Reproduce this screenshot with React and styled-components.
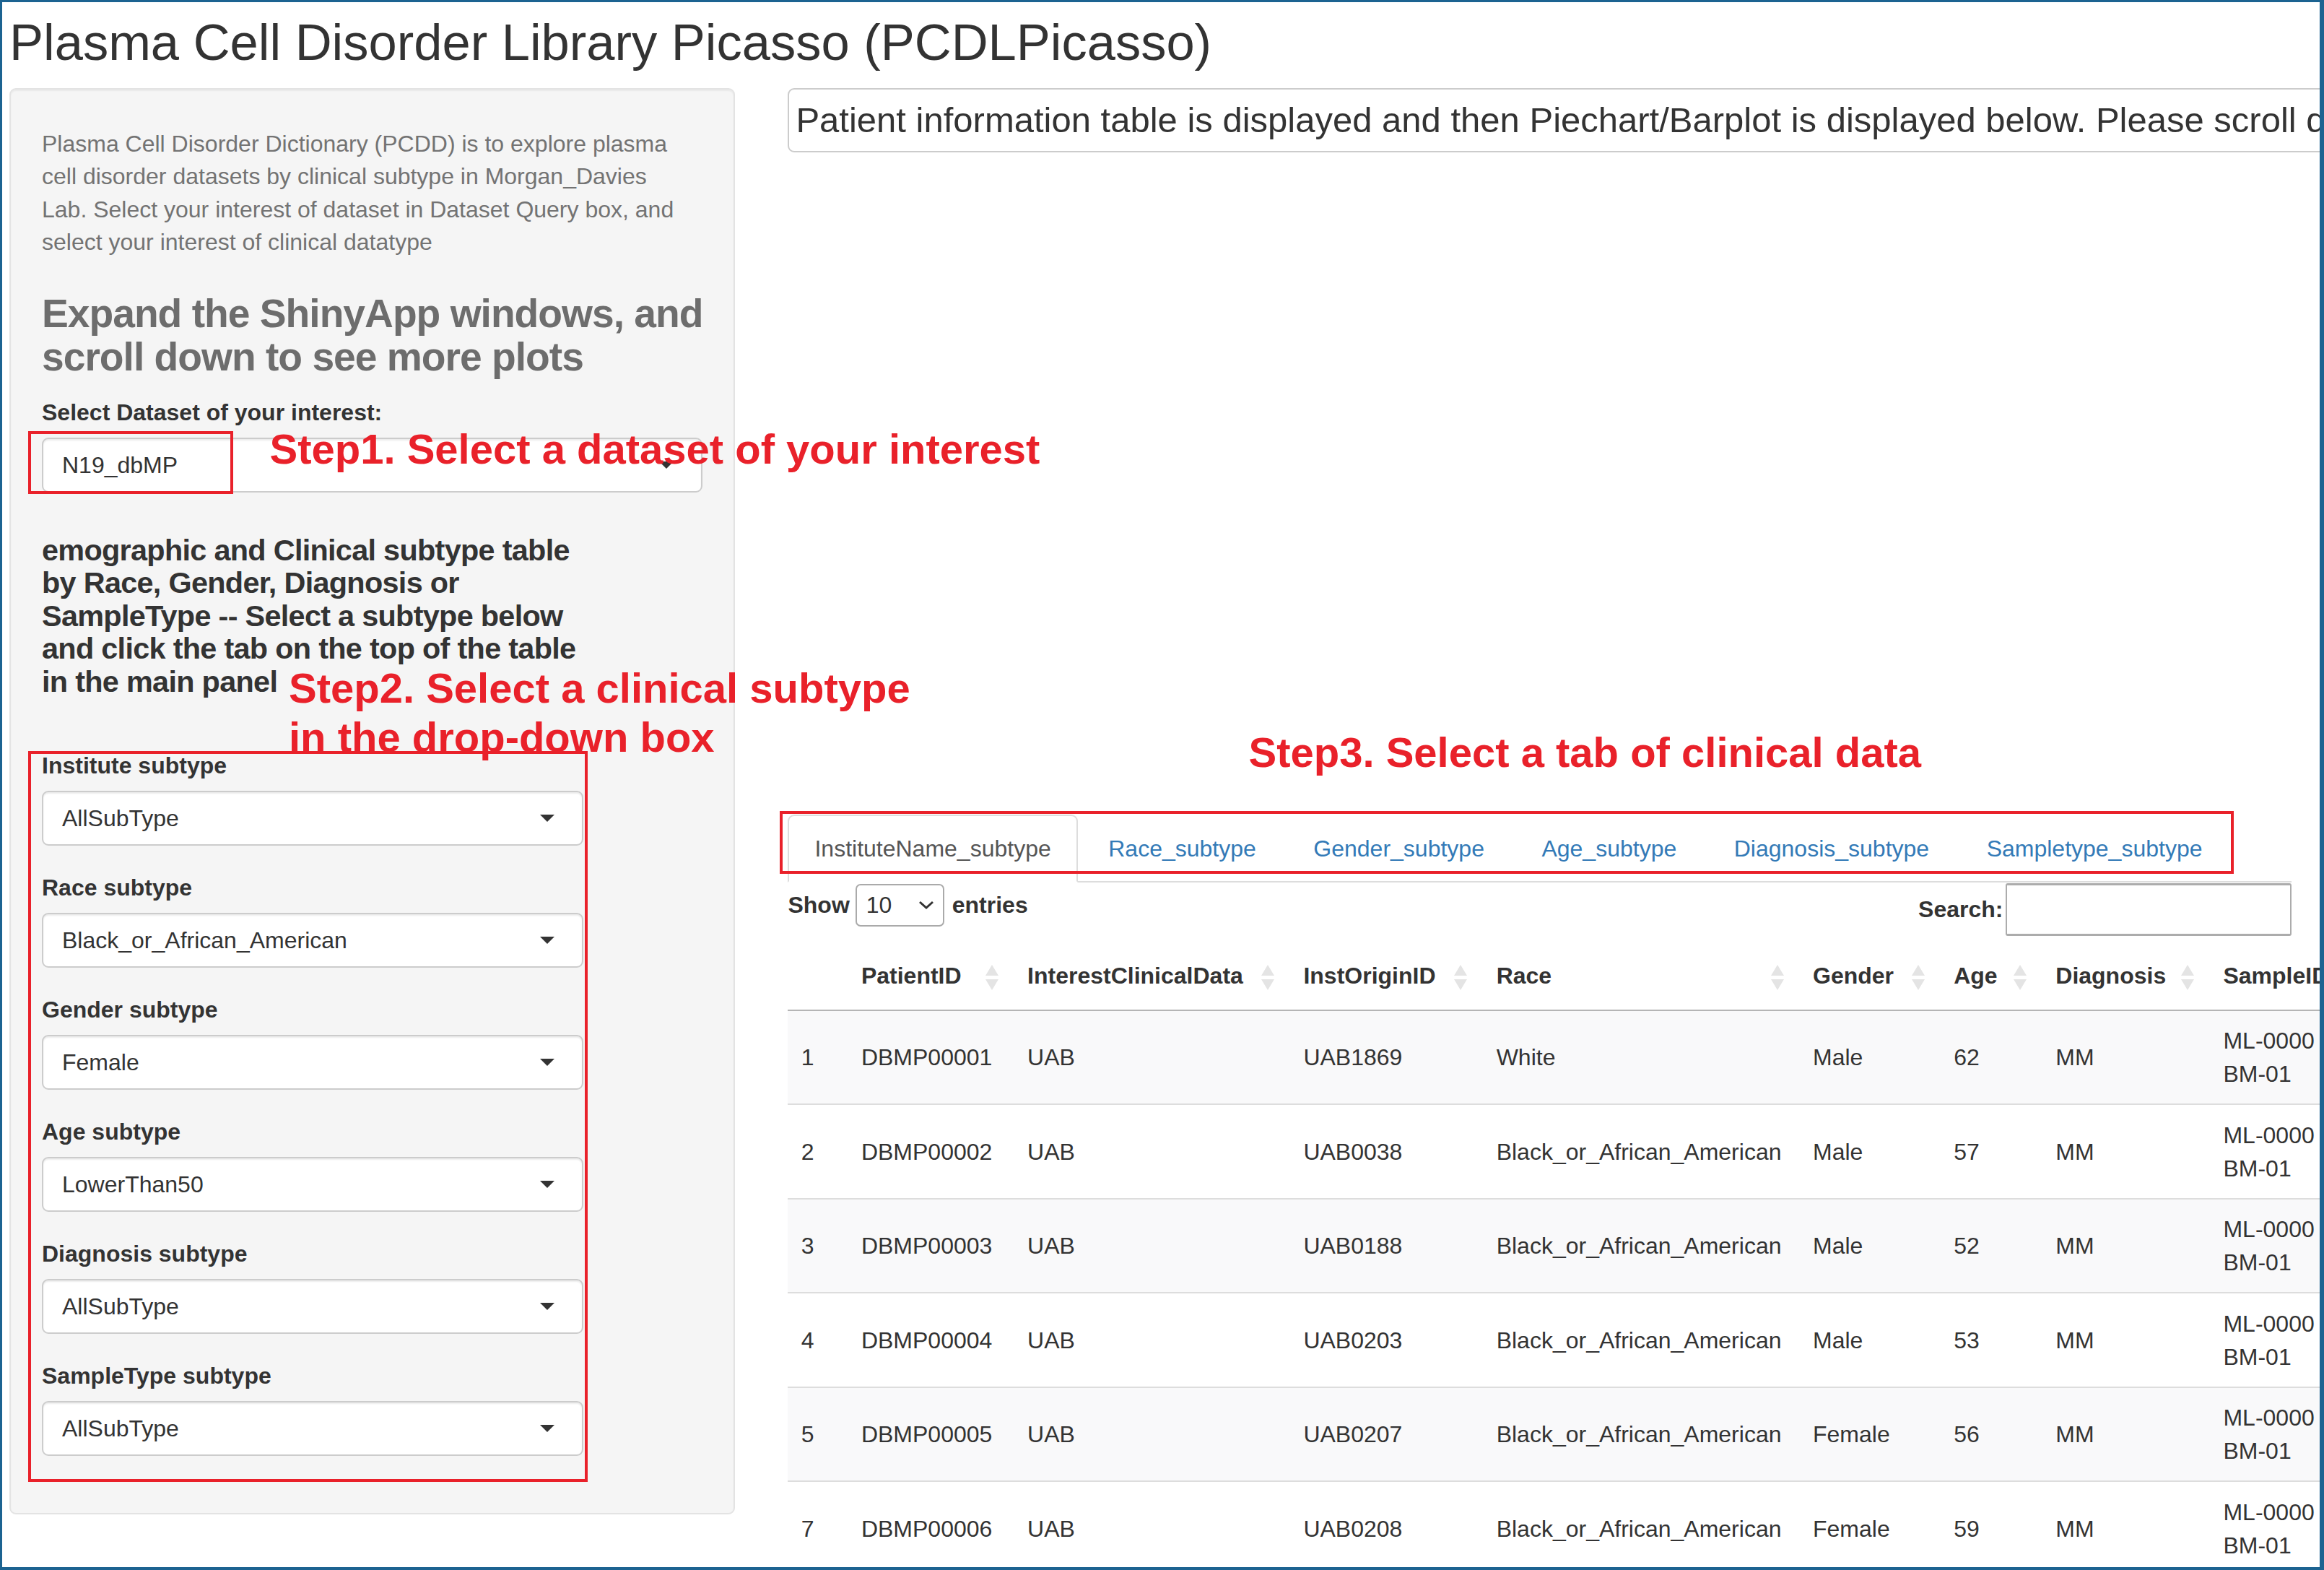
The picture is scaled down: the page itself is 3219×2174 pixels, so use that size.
import React from 'react';
import styled, { createGlobalStyle } from 'styled-components';

const GlobalStyle = createGlobalStyle`
  html, body { margin: 0; padding: 0; background: #fff; overflow: hidden; }
  * { box-sizing: border-box; }
`;

const Frame = styled.div`
  position: relative;
  width: 3219px;
  height: 2174px;
  border-style: solid;
  border-color: #1c6391;
  border-width: 3px 6px 4px 3px;
  overflow: hidden;
  padding-left: 10px;
  font-family: 'Liberation Sans', Arial, Helvetica, sans-serif;
  color: #333;
`;

const Title = styled.h2`
  margin: 18px 0 0;
  font-size: 70.5px;
  line-height: 75.9px;
  font-weight: 400;
  white-space: nowrap;
`;

const Layout = styled.div`
  display: flex;
  align-items: flex-start;
  margin-top: 25px;
`;

/* sidebar */
const Well = styled.div`
  flex: 0 0 1005px;
  background: #f5f5f5;
  border: 2px solid #e3e3e3;
  border-radius: 9px;
  box-shadow: inset 0 2px 2px rgba(0, 0, 0, 0.05);
  padding: 44px 43px;
`;

const Intro = styled.p`
  margin: 9px 0 0;
  font-size: 32px;
  line-height: 45.5px;
  color: #737373;
  white-space: nowrap;
`;

const Hint = styled.h3`
  margin: 45.5px 0 0;
  font-size: 55.2px;
  line-height: 60px;
  font-weight: 700;
  letter-spacing: -1px;
  color: #6d6d6d;
  white-space: nowrap;
`;

const Label = styled.label`
  display: block;
  margin-top: ${({ $top }) => $top || 0}px;
  font-size: 32px;
  line-height: 46px;
  font-weight: 700;
  white-space: nowrap;
`;

const SelectBox = styled.div`
  display: flex;
  align-items: center;
  justify-content: space-between;
  margin-top: 12.5px;
  height: 76px;
  padding: 0 38px 0 26px;
  background: #fff;
  border: 2px solid #ccc;
  border-radius: 9px;
  box-shadow: inset 0 2px 2px rgba(0, 0, 0, 0.08);
  font-size: 32px;
  color: #333;
`;

const Caret = styled.span`
  width: 0;
  height: 0;
  border-left: 10px solid transparent;
  border-right: 10px solid transparent;
  border-top: 10px solid #333;
`;

const SubHeading = styled.h4`
  margin: 57.5px 0 0;
  font-size: 41.4px;
  line-height: 45.5px;
  font-weight: 700;
  letter-spacing: -0.7px;
  white-space: nowrap;
`;

const SubtypeList = styled.div`
  width: 750px;
  margin-top: 69.5px;
`;

const FieldGroup = styled.div`
  margin-bottom: 34.5px;
`;

/* main panel */
const Main = styled.div`
  flex: 0 0 2083px;
  min-width: 0;
  margin-left: 73px;
`;

const InfoBox = styled.div`
  width: 2200px;
  height: 89px;
  display: flex;
  align-items: center;
  padding: 0 9px;
  border: 2px solid #ccc;
  border-radius: 9px;
  font-size: 49px;
  white-space: nowrap;
  overflow: hidden;
`;

const Tabs = styled.ul`
  display: flex;
  margin: 917px 0 0;
  padding: 0;
  list-style: none;
  border-bottom: 2px solid #ddd;
`;

const Tab = styled.li`
  margin: 0 5.5px -2px 0;
  padding: 22px 35px;
  font-size: 32px;
  line-height: 46px;
  white-space: nowrap;
  border: 2px solid ${({ $active }) => ($active ? '#ddd' : 'transparent')};
  border-bottom-color: transparent;
  border-radius: 9px 9px 0 0;
  background: ${({ $active }) => ($active ? '#fff' : 'transparent')};
  color: ${({ $active }) => ($active ? '#555' : '#337ab7')};
`;

const Controls = styled.div`
  display: flex;
  justify-content: space-between;
  align-items: flex-start;
  height: 74px;
  font-size: 32px;
  font-weight: 700;
`;

const LengthControl = styled.div`
  display: flex;
  align-items: center;
  padding-top: 2px;
  line-height: 46px;
`;

const LengthSelect = styled.div`
  display: flex;
  align-items: center;
  justify-content: space-between;
  width: 123px;
  height: 59px;
  margin: 0 11px 0 8px;
  padding: 0 12px 0 13px;
  border: 2px solid #aaa;
  border-radius: 7px;
  font-weight: 400;
`;

const SearchControl = styled.div`
  display: flex;
  align-items: center;
  padding-top: 1px;
`;

const SearchInput = styled.div`
  width: 396px;
  height: 73px;
  margin-left: 4px;
  border: 2px solid #acacac;
  border-top-width: 3px;
  border-bottom-width: 3px;
  border-radius: 3px;
  background: #fff;
`;

const Table = styled.table`
  width: 2300px;
  margin-top: 8px;
  table-layout: fixed;
  border-collapse: separate;
  border-spacing: 0;
  font-size: 32px;
  line-height: 46px;
`;

const Th = styled.th`
  position: relative;
  padding: 24px 18.4px;
  text-align: left;
  font-weight: 700;
  white-space: nowrap;
  border-bottom: 2px solid #b5b5b5;
`;

const SortIcon = styled.svg`
  position: absolute;
  right: 22px;
  top: 32px;
`;

const Row = styled.tr`
  background: ${({ $striped }) => ($striped ? '#f9f9fa' : '#fff')};
`;

const Td = styled.td`
  padding: 18.25px 18.4px;
  vertical-align: middle;
  white-space: nowrap;
  overflow: hidden;
  border-bottom: 2px solid #ddd;
`;

/* red annotations drawn over the screenshot */
const Callout = styled.div`
  position: absolute;
  top: ${({ $top }) => $top}px;
  left: ${({ $left }) => $left}px;
  font-size: 58px;
  line-height: ${({ $lh }) => $lh || 58}px;
  font-weight: 700;
  color: #e9212a;
  white-space: nowrap;
`;

const Marker = styled.div`
  position: absolute;
  top: ${({ $top }) => $top}px;
  left: ${({ $left }) => $left}px;
  width: ${({ $w }) => $w}px;
  height: ${({ $h }) => $h}px;
  border: 4px solid #e9212a;
`;

const subtypes = [
  ['Institute subtype', 'AllSubType'],
  ['Race subtype', 'Black_or_African_American'],
  ['Gender subtype', 'Female'],
  ['Age subtype', 'LowerThan50'],
  ['Diagnosis subtype', 'AllSubType'],
  ['SampleType subtype', 'AllSubType'],
];

const tabs = [
  'InstituteName_subtype',
  'Race_subtype',
  'Gender_subtype',
  'Age_subtype',
  'Diagnosis_subtype',
  'Sampletype_subtype',
];

const columns = [
  { title: '', width: 83 },
  { title: 'PatientID', width: 230, sort: true },
  { title: 'InterestClinicalData', width: 382, sort: true },
  { title: 'InstOriginID', width: 267, sort: true },
  { title: 'Race', width: 438, sort: true },
  { title: 'Gender', width: 195, sort: true },
  { title: 'Age', width: 141, sort: true },
  { title: 'Diagnosis', width: 232, sort: true },
  { title: 'SampleID', width: 330 },
];

const patients = [
  ['1', 'DBMP00001', 'UAB', 'UAB1869', 'White', 'Male', '62', 'MM'],
  ['2', 'DBMP00002', 'UAB', 'UAB0038', 'Black_or_African_American', 'Male', '57', 'MM'],
  ['3', 'DBMP00003', 'UAB', 'UAB0188', 'Black_or_African_American', 'Male', '52', 'MM'],
  ['4', 'DBMP00004', 'UAB', 'UAB0203', 'Black_or_African_American', 'Male', '53', 'MM'],
  ['5', 'DBMP00005', 'UAB', 'UAB0207', 'Black_or_African_American', 'Female', '56', 'MM'],
  ['7', 'DBMP00006', 'UAB', 'UAB0208', 'Black_or_African_American', 'Female', '59', 'MM'],
];

const Sort = () => (
  <SortIcon width='18' height='35' viewBox='0 0 18 35'>
    <polygon points='9,0 18,15 0,15' fill='#e4e4e4' />
    <polygon points='0,20 18,20 9,35' fill='#e4e4e4' />
  </SortIcon>
);

const Dropdown = ({ value }) => (
  <SelectBox>
    <span>{value}</span>
    <Caret />
  </SelectBox>
);

const App = () => {
  return (
    <Frame>
      <GlobalStyle />
      <Title>Plasma Cell Disorder Library Picasso (PCDLPicasso)</Title>
      <Layout>
        <Well>
          <Intro>
            Plasma Cell Disorder Dictionary (PCDD) is to explore plasma
            <br />
            cell disorder datasets by clinical subtype in Morgan_Davies
            <br />
            Lab. Select your interest of dataset in Dataset Query box, and
            <br />
            select your interest of clinical datatype
          </Intro>
          <Hint>
            Expand the ShinyApp windows, and
            <br />
            scroll down to see more plots
          </Hint>
          <Label $top={23.5}>Select Dataset of your interest:</Label>
          <Dropdown value='N19_dbMP' />
          <SubHeading>
            emographic and Clinical subtype table
            <br />
            by Race, Gender, Diagnosis or
            <br />
            SampleType -- Select a subtype below
            <br />
            and click the tab on the top of the table
            <br />
            in the main panel
          </SubHeading>
          <SubtypeList>
            {subtypes.map(([label, value]) => (
              <FieldGroup key={label}>
                <Label>{label}</Label>
                <Dropdown value={value} />
              </FieldGroup>
            ))}
          </SubtypeList>
        </Well>

        <Main>
          <InfoBox>
            Patient information table is displayed and then Piechart/Barplot is displayed below. Please scroll down.
          </InfoBox>
          <Tabs>
            {tabs.map((t, i) => (
              <Tab key={t} $active={i === 0}>
                {t}
              </Tab>
            ))}
          </Tabs>
          <Controls>
            <LengthControl>
              Show
              <LengthSelect>
                <span>10</span>
                <svg width='22' height='13' viewBox='0 0 22 13'>
                  <polyline points='2,2 11,10 20,2' fill='none' stroke='#333' strokeWidth='3' />
                </svg>
              </LengthSelect>
              entries
            </LengthControl>
            <SearchControl>
              Search:
              <SearchInput />
            </SearchControl>
          </Controls>
          <Table>
            <colgroup>
              {columns.map((c, i) => (
                <col key={i} style={{ width: c.width }} />
              ))}
            </colgroup>
            <thead>
              <tr>
                {columns.map((c, i) => (
                  <Th key={i}>
                    {c.title}
                    {c.sort && <Sort />}
                  </Th>
                ))}
              </tr>
            </thead>
            <tbody>
              {patients.map((p, r) => (
                <Row key={p[0]} $striped={r % 2 === 0}>
                  {p.map((v, i) => (
                    <Td key={i}>{v}</Td>
                  ))}
                  <Td>
                    ML-0000
                    <br />
                    BM-01
                  </Td>
                </Row>
              ))}
            </tbody>
          </Table>
        </Main>
      </Layout>

      <Marker $top={594} $left={36} $w={284} $h={87} />
      <Callout $top={590} $left={370.5}>
        Step1. Select a dataset of your interest
      </Callout>
      <Callout $top={916} $left={397} $lh={68}>
        Step2. Select a clinical subtype
        <br />
        in the drop-down box
      </Callout>
      <Marker $top={1037} $left={36} $w={775} $h={1012} />
      <Callout $top={1010} $left={1726.5}>
        Step3. Select a tab of clinical data
      </Callout>
      <Marker $top={1120} $left={1077} $w={2014} $h={87} />
    </Frame>
  );
};

export default App;
